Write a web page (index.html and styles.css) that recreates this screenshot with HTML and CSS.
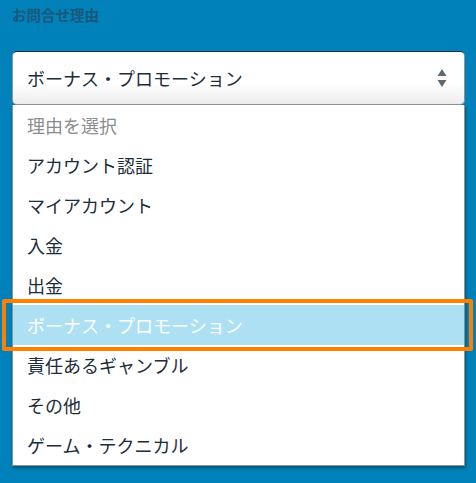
FILE: index.html
```html
<!DOCTYPE html>
<html lang="ja">
<head>
<meta charset="utf-8">
<link rel="stylesheet" href="styles.css">
</head>
<body>
<div class="field">
  <div class="label">お問合せ理由</div>
  <div class="select">
    <span class="select-value">ボーナス・プロモーション</span>
    <svg class="arrows" width="10" height="18" viewBox="0 0 10 18"><path d="M5 0 L9.5 7 H0.5 Z M5 18 L9.5 11 H0.5 Z" fill="#5d6a73"/></svg>
  </div>
  <ul class="options">
    <li class="option placeholder">理由を選択</li>
    <li class="option">アカウント認証</li>
    <li class="option">マイアカウント</li>
    <li class="option">入金</li>
    <li class="option">出金</li>
    <li class="option selected">ボーナス・プロモーション<span class="mark"></span></li>
    <li class="option">責任あるギャンブル</li>
    <li class="option">その他</li>
    <li class="option">ゲーム・テクニカル</li>
  </ul>
</div>
</body>
</html>
```
FILE: styles.css
```css
html, body {
  margin: 0;
  padding: 0;
  background: #0081b9;
  height: 100%;
}
body {
  font-family: "Noto Sans CJK JP", "Noto Sans", sans-serif;
  color: #1b2d3b;
}
.field {
  padding: 5px 11px 0 12px;
}
.label {
  font-size: 14.5px;
  font-weight: bold;
  line-height: 20px;
  color: #1d577a;
  margin-bottom: 26px;
}
.select {
  box-sizing: border-box;
  height: 54px;
  display: flex;
  align-items: center;
  justify-content: space-between;
  padding: 0 17px 0 14px;
  background: linear-gradient(to bottom, #ffffff 0%, #ffffff 60%, #ececec 100%);
  border: 1px solid #8b959b;
  border-top-color: #163446;
  border-radius: 5px;
}
.select-value {
  font-size: 18px;
  line-height: 24px;
  color: #1b2d3b;
}
.arrows {
  display: block;
}
.options {
  list-style: none;
  margin: 0;
  padding: 0;
  background: #fff;
  border: 1px solid #8f8f8f;
  border-top: none;
  box-shadow: 1px 2px 3px rgba(0, 0, 0, 0.35);
}
.option {
  position: relative;
  height: 40px;
  line-height: 40px;
  padding-left: 14px;
  font-size: 18px;
  color: #1b2d3b;
}
.option.placeholder {
  color: #8a8d90;
}
.option.selected {
  background: #aee0f4;
  color: #ffffff;
}
.mark {
  position: absolute;
  top: -6px;
  bottom: -6px;
  left: -11px;
  right: -9px;
  border: 4px solid #ff8000;
  border-radius: 2px;
}
```
